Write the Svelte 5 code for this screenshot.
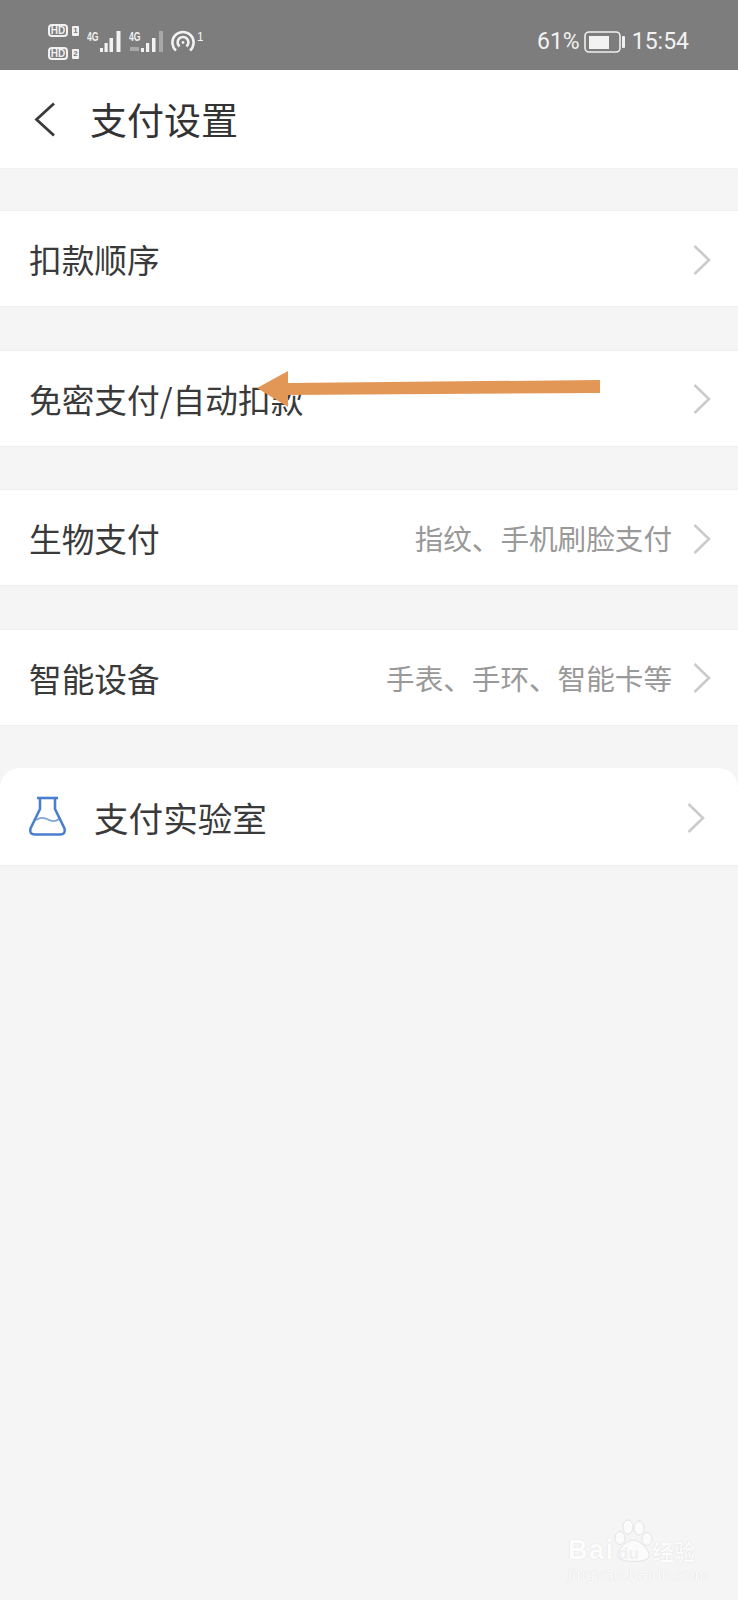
<script lang="ts">
	const rows = [
		{ label: '扣款顺序', hint: '' },
		{ label: '免密支付/自动扣款', hint: '' },
		{ label: '生物支付', hint: '指纹、手机刷脸支付' },
		{ label: '智能设备', hint: '手表、手环、智能卡等' }
	];
</script>

<div class="page">
	<div class="status">
		<div class="status-left">
			<div class="hd-stack">
				<div class="hd-line"><span class="hd">HD</span><span class="sim">1</span></div>
				<div class="hd-line"><span class="hd">HD</span><span class="sim">2</span></div>
			</div>
			<svg class="signal" width="36" height="24" viewBox="0 0 36 24">
				<text x="0" y="11" class="net" textLength="11.5" lengthAdjust="spacingAndGlyphs">4G</text>
				<rect x="13" y="18" width="3" height="4" fill="#f2f2f2" />
				<rect x="17.5" y="13" width="3.2" height="9" fill="#f2f2f2" />
				<rect x="22.5" y="8" width="3.5" height="14" fill="#f2f2f2" />
				<rect x="29.5" y="1" width="4" height="21" fill="#f2f2f2" />
			</svg>
			<svg class="signal" width="36" height="24" viewBox="0 0 36 24">
				<text x="0" y="11" class="net" textLength="11.5" lengthAdjust="spacingAndGlyphs">4G</text>
				<rect x="1" y="17" width="9" height="4" fill="#a8a8a8" />
				<rect x="12" y="18" width="3" height="4" fill="#f2f2f2" />
				<rect x="17" y="13" width="3.2" height="9" fill="#f2f2f2" />
				<rect x="23" y="8" width="3.5" height="14" fill="#f2f2f2" />
				<rect x="30" y="1" width="4" height="21" fill="#a8a8a8" />
			</svg>
			<svg class="hotspot" width="32" height="24" viewBox="0 0 32 24" fill="none" stroke="#f2f2f2" stroke-width="2.6">
				<path d="M5 20.5 A10.6 10.6 0 1 1 19 20.5" />
				<path d="M8.5 16.5 A5.4 5.4 0 1 1 15.5 16.5" />
				<circle cx="12" cy="12.5" r="1.4" fill="#f2f2f2" stroke="none" />
				<text x="26" y="11" class="hot-num" stroke="none" fill="#f2f2f2">1</text>
			</svg>
		</div>
		<div class="status-right">
			<span>61%</span>
			<svg class="battery" width="41" height="22" viewBox="0 0 41 22">
				<rect x="1" y="1" width="35" height="20" rx="4" fill="none" stroke="#f0f0f0" stroke-width="1.6" />
				<rect x="5" y="5" width="20" height="13" fill="#f2f2f2" />
				<rect x="38" y="5" width="3" height="12" rx="1" fill="#f0f0f0" />
			</svg>
			<span>15:54</span>
		</div>
	</div>

	<header class="title-bar">
		<svg class="back" width="24" height="36" viewBox="0 0 24 36" fill="none" stroke="#3a3a3a" stroke-width="2.8">
			<path d="M21 2.5 L3.5 18.5 L21 34.5" />
		</svg>
		<h1>支付设置</h1>
	</header>

	<div class="list">
		{#each rows as row}
			<div class="row">
				<span class="label">{row.label}</span>
				{#if row.hint}<span class="hint">{row.hint}</span>{/if}
				<svg class="chevron" width="20" height="32" viewBox="0 0 20 32" fill="none" stroke="#cbcbcb" stroke-width="2.6">
					<path d="M2.5 2 L17 16 L2.5 30" />
				</svg>
			</div>
		{/each}

		<div class="row lab">
			<svg class="flask" width="40" height="42" viewBox="0 0 40 42" fill="none" stroke="#4a7fd0" stroke-width="2.6" stroke-linejoin="round">
				<path d="M9 3 H30" />
				<path d="M12 3 V14 L2.5 33.5 Q1 39.5 7 39.5 H32 Q38 39.5 36.5 33.5 L27 14 V3" />
				<path d="M8 25 Q14 21 20 24.5 T31 24" stroke-width="1.8" opacity="0.7" />
			</svg>
			<span class="label">支付实验室</span>
			<svg class="chevron" width="20" height="32" viewBox="0 0 20 32" fill="none" stroke="#cbcbcb" stroke-width="2.6">
				<path d="M2.5 2 L17 16 L2.5 30" />
			</svg>
		</div>
	</div>

	<svg class="arrow" width="346" height="38" viewBox="0 0 346 38">
		<path d="M1 18 L32 1 L32 13 L344 10 L344 23 L32 25 L32 37 Z" fill="#e39757" />
	</svg>

	<div class="watermark">
		<svg class="paw" width="40" height="46" viewBox="0 0 40 46" fill="#fbfbfb" stroke="#e4e4e4" stroke-width="1">
			<ellipse cx="7" cy="20" rx="5" ry="6.5" />
			<ellipse cx="15" cy="9" rx="5" ry="7" />
			<ellipse cx="26" cy="10" rx="5" ry="7" />
			<ellipse cx="34" cy="21" rx="5" ry="6.5" />
			<path d="M20 22 C27 22 38 33 36 39 C34 45 8 45 5 39 C3 33 13 22 20 22 Z" />
		</svg>
		<div class="wm-top">
			<span class="wm-bai">Bai</span><span class="wm-du">du</span><span class="wm-cn">经验</span>
		</div>
		<div class="wm-url">jingyan.baidu.com</div>
	</div>
</div>

<style>
	:global(body) {
		margin: 0;
		background: #f5f5f5;
	}

	.page {
		position: relative;
		width: 738px;
		height: 1600px;
		overflow: hidden;
		background: #f5f5f5;
		font-family: 'Noto Sans CJK SC', 'Noto Sans', sans-serif;
		color: #3a3a3a;
	}

	.status {
		height: 70px;
		box-sizing: border-box;
		background: #7d7d7d;
		display: flex;
		justify-content: space-between;
		align-items: flex-start;
		padding: 0 49px 0 48px;
		color: #f2f2f2;
	}

	.status-left {
		display: flex;
		align-items: flex-start;
		gap: 6px;
		padding-top: 24px;
	}

	.hd-stack {
		display: flex;
		flex-direction: column;
		gap: 10px;
		margin-right: 2px;
	}

	.hd-line {
		display: flex;
		align-items: center;
		gap: 4px;
	}

	.hd {
		width: 20px;
		height: 13px;
		box-sizing: border-box;
		border: 2px solid #f2f2f2;
		border-radius: 4px;
		font: bold 10px/9px 'Liberation Sans', sans-serif;
		text-align: center;
	}

	.sim {
		width: 7px;
		height: 10px;
		background: #f2f2f2;
		color: #7d7d7d;
		border-radius: 1px;
		font: bold 8px/10px 'Liberation Sans', sans-serif;
		text-align: center;
	}

	.signal,
	.hotspot {
		margin-top: 6px;
	}

	.net {
		font: bold 13px 'Liberation Sans', sans-serif;
		fill: #f2f2f2;
	}

	.hot-num {
		font: 12px 'Liberation Sans', sans-serif;
	}

	.status-right {
		display: flex;
		align-items: center;
		font: 23px/28px 'Roboto', sans-serif;
		padding-top: 28px;
	}

	.battery {
		margin: 0 7px 0 4px;
	}

	.title-bar {
		height: 99px;
		box-sizing: border-box;
		background: #fff;
		border-bottom: 1px solid #f0f0f0;
		display: flex;
		align-items: center;
		padding-left: 33px;
	}

	.back {
		margin-right: 33px;
	}

	h1 {
		margin: 0;
		font-size: 37px;
		font-weight: 400;
		color: #333;
	}

	.list {
		display: flex;
		flex-direction: column;
		gap: 42.5px;
		padding-top: 41px;
	}

	.row {
		height: 97px;
		box-sizing: border-box;
		background: #fff;
		border-top: 1px solid #efefef;
		border-bottom: 1px solid #efefef;
		display: flex;
		align-items: center;
		padding: 0 26px 0 29px;
	}

	.label {
		font-size: 32.7px;
		flex: 1;
	}

	.hint {
		font-size: 28.6px;
		color: #999;
		margin-right: 20px;
	}

	.chevron {
		margin-top: 2px;
	}

	.lab {
		height: 98px;
		border-top: 0;
		border-radius: 20px 20px 0 0;
		padding-right: 32px;
	}

	.lab .label {
		font-size: 34.6px;
	}

	.flask {
		margin: -1px 26px 0 -1px;
	}

	.arrow {
		position: absolute;
		left: 256px;
		top: 370px;
	}

	.watermark {
		position: absolute;
		left: 566px;
		top: 1520px;
		width: 140px;
		height: 70px;
		color: #fdfdfd;
		text-shadow: 0 0 1px #cfcfcf;
	}

	.wm-top {
		position: relative;
		display: flex;
		align-items: center;
		padding-top: 14px;
		line-height: 24px;
		white-space: nowrap;
	}

	.wm-bai {
		width: 50px;
		font: bold 27px/24px 'Liberation Sans', sans-serif;
		letter-spacing: 1.5px;
		padding-left: 2px;
	}

	.wm-du {
		width: 34px;
		font: bold 17px/24px 'Liberation Sans', sans-serif;
		padding-top: 8px;
		color: #f0f0f0;
		text-shadow: none;
	}

	.wm-cn {
		font-size: 22px;
		font-weight: 500;
	}

	.paw {
		position: absolute;
		left: 47px;
		top: -2px;
	}

	.wm-url {
		position: relative;
		padding-left: 2px;
		font: 16px/18px 'Liberation Sans', sans-serif;
		letter-spacing: 0.7px;
		white-space: nowrap;
	}
</style>
